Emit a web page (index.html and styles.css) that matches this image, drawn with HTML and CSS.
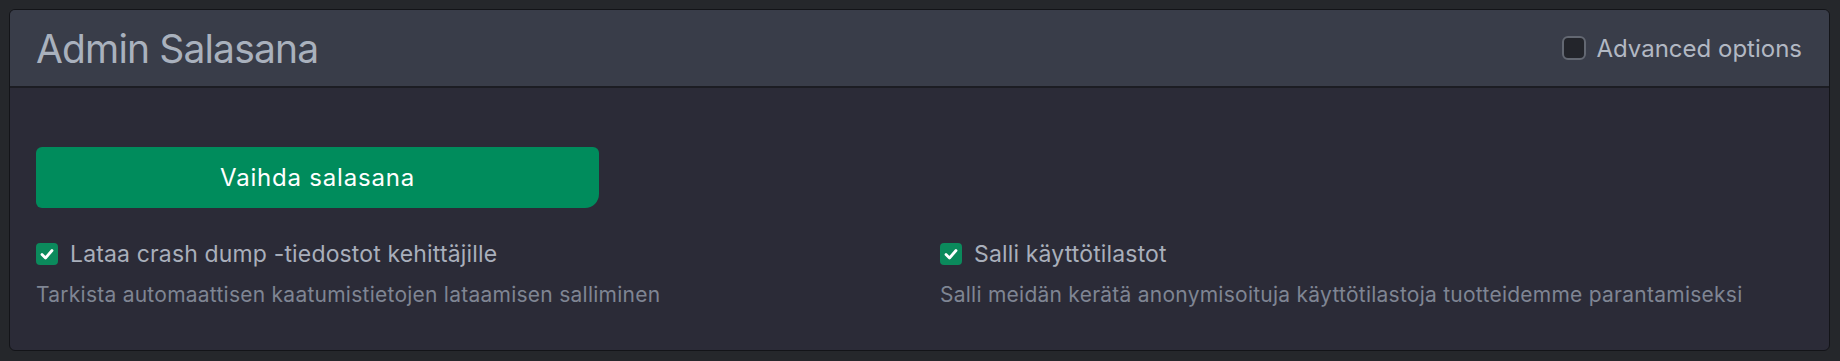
FILE: index.html
```html
<!DOCTYPE html>
<html lang="fi">
<head>
<meta charset="utf-8">
<title>Admin Salasana</title>
<link rel="stylesheet" href="styles.css">
</head>
<body>
<section class="card">
  <header class="card-header">
    <h2 class="title">Admin Salasana</h2>
    <label class="advanced">
      <span class="box-empty"></span>
      <span class="advanced-text">Advanced options</span>
    </label>
  </header>
  <div class="card-body">
    <button class="btn-primary">Vaihda salasana</button>
    <div class="options">
      <div class="option">
        <div class="option-row">
          <span class="box-checked"><svg viewBox="0 0 22 22" width="22" height="22"><polyline points="6,11.5 9.5,15 16,7.5" fill="none" stroke="#fff" stroke-width="2.8" stroke-linecap="round" stroke-linejoin="round"/></svg></span>
          <span class="option-label">Lataa crash dump -tiedostot kehittäjille</span>
        </div>
        <p class="option-desc">Tarkista automaattisen kaatumistietojen lataamisen salliminen</p>
      </div>
      <div class="option">
        <div class="option-row">
          <span class="box-checked"><svg viewBox="0 0 22 22" width="22" height="22"><polyline points="6,11.5 9.5,15 16,7.5" fill="none" stroke="#fff" stroke-width="2.8" stroke-linecap="round" stroke-linejoin="round"/></svg></span>
          <span class="option-label">Salli käyttötilastot</span>
        </div>
        <p class="option-desc">Salli meidän kerätä anonymisoituja käyttötilastoja tuotteidemme parantamiseksi</p>
      </div>
    </div>
  </div>
</section>
</body>
</html>
```

FILE: styles.css
```css
* { box-sizing: border-box; }

html, body {
  margin: 0;
  background: #25272b;
}

body {
  padding: 9px 10px 10px 9px;
  font-family: Inter, "Noto Sans", "Liberation Sans", sans-serif;
}

.card {
  height: 342px;
  display: flex;
  flex-direction: column;
  border: 1px solid #131418;
  border-radius: 6px;
  overflow: hidden;
  background: #2b2b37;
}

.card-header {
  height: 78px;
  flex: none;
  display: flex;
  align-items: center;
  justify-content: space-between;
  padding: 0 27px 0 26px;
  background: #393d49;
  border-bottom: 2px solid #1c1d23;
}

.title {
  margin: 0;
  font-weight: 400;
  font-size: 39px;
  letter-spacing: -0.85px;
  color: #a9b1bd;
}

.advanced {
  display: flex;
  align-items: center;
  gap: 10px;
}

.box-empty {
  width: 24px;
  height: 24px;
  border: 2px solid #636872;
  border-radius: 6px;
  background: #23252b;
}

.advanced-text {
  font-size: 24px;
  color: #b2b8c3;
}

.card-body {
  flex: 1;
  padding: 59px 26px 0 26px;
}

.btn-primary {
  display: block;
  width: 563px;
  height: 61px;
  border: none;
  border-radius: 6px 6px 14px 6px;
  background: #008c5c;
  color: #ffffff;
  font-family: inherit;
  font-size: 24px;
  letter-spacing: 0.8px;
}

.options {
  display: grid;
  grid-template-columns: 1fr 1fr;
  column-gap: 41px;
  margin-top: 32px;
}

.option-row {
  display: flex;
  align-items: center;
  gap: 12px;
  height: 28px;
}

.box-checked {
  width: 22px;
  height: 22px;
  border-radius: 4px;
  background: #0b8a5c;
  display: flex;
}

.option-label {
  font-size: 23px;
  letter-spacing: 0.15px;
  color: #a9afbb;
}

.option-desc {
  margin: 13px 0 0 0;
  font-size: 21px;
  line-height: 27px;
  letter-spacing: 0.25px;
  color: #7f8593;
}
```
